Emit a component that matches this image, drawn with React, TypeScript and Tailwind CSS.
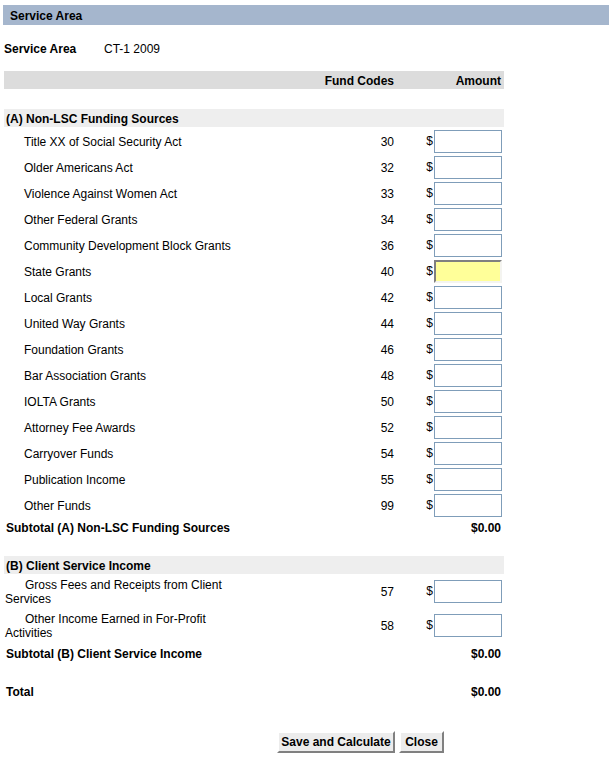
import type { ReactNode } from 'react'

const fundRows: [string, string, boolean?][] = [
  ['Title XX of Social Security Act', '30'],
  ['Older Americans Act', '32'],
  ['Violence Against Women Act', '33'],
  ['Other Federal Grants', '34'],
  ['Community Development Block Grants', '36'],
  ['State Grants', '40', true],
  ['Local Grants', '42'],
  ['United Way Grants', '44'],
  ['Foundation Grants', '46'],
  ['Bar Association Grants', '48'],
  ['IOLTA Grants', '50'],
  ['Attorney Fee Awards', '52'],
  ['Carryover Funds', '54'],
  ['Publication Income', '55'],
  ['Other Funds', '99'],
]

const clientRows: [string, string][] = [
  ['Gross Fees and Receipts from Client Services', '57'],
  ['Other Income Earned in For-Profit Activities', '58'],
]

function AmountInput({ active }: { active?: boolean }) {
  return (
    <div className="flex items-center justify-end pr-[2px]">
      <span className="mr-px">$</span>
      {active ? (
        <input
          className="w-[68px] h-[23px] bg-[#ffff99] border-2 border-t-[#808080] border-l-[#808080] border-b-[#f4f4f0] border-r-[#f4f4f0] outline-none"
          defaultValue=""
        />
      ) : (
        <input
          className="w-[68px] h-[23px] bg-white border border-[#7f9db9] outline-none"
          defaultValue=""
        />
      )}
    </div>
  )
}

function Row({ label, code, active }: { label: string; code: string; active?: boolean }) {
  return (
    <div className="grid grid-cols-[250px_140px_110px] items-center h-[26px]">
      <div className="pl-[20px] pt-px whitespace-nowrap">{label}</div>
      <div className="text-right pt-px">{code}</div>
      <AmountInput active={active} />
    </div>
  )
}

function WrapRow({ label, code }: { label: string; code: string }) {
  return (
    <div className="grid grid-cols-[250px_140px_110px] items-center h-[34px]">
      <div className="indent-[20px] leading-[14px] pr-[12px] pl-px pt-px">{label}</div>
      <div className="text-right pt-px">{code}</div>
      <AmountInput />
    </div>
  )
}

function TotalRow({ children, value }: { children: ReactNode; value: string }) {
  return (
    <div className="flex items-center justify-between h-[18px] font-bold pl-[2px] pr-[3px] pt-[2px]">
      <span>{children}</span>
      <span>{value}</span>
    </div>
  )
}

export default function App() {
  return (
    <div
      className="w-[609px] h-[765px] bg-white text-black text-[12px] pt-[5px]"
      style={{ fontFamily: '"Liberation Sans", Arial, sans-serif' }}
    >
      <div className="ml-[3px] h-[20px] bg-[#a5b6cd] flex items-center pl-[7px] pt-px font-bold">
        Service Area
      </div>

      <div className="pl-[4px] w-[504px]">
        <div className="flex items-center h-[14px] mt-[17px]">
          <span className="w-[100px] font-bold">Service Area</span>
          <span>CT-1 2009</span>
        </div>

        <div className="grid grid-cols-[250px_140px_110px] items-center h-[18px] mt-[15px] pt-px bg-[#dcdcdc] font-bold">
          <div />
          <div className="text-right">Fund Codes</div>
          <div className="text-right pr-[3px]">Amount</div>
        </div>

        <div className="h-[18px] mt-[20px] bg-[#eeeeee] font-bold flex items-center pl-[2px] pt-[2px]">
          (A) Non-LSC Funding Sources
        </div>
        <div className="h-px" />
        {fundRows.map(([label, code, active]) => (
          <Row key={code} label={label} code={code} active={active} />
        ))}
        <TotalRow value="$0.00">Subtotal (A) Non-LSC Funding Sources</TotalRow>

        <div className="h-[18px] mt-[20px] bg-[#eeeeee] font-bold flex items-center pl-[2px] pt-[2px]">
          (B) Client Service Income
        </div>
        {clientRows.map(([label, code]) => (
          <WrapRow key={code} label={label} code={code} />
        ))}
        <div className="mt-[2px]">
          <TotalRow value="$0.00">Subtotal (B) Client Service Income</TotalRow>
        </div>

        <div className="mt-[20px]">
          <TotalRow value="$0.00">Total</TotalRow>
        </div>
      </div>

      <div className="flex gap-[4px] ml-[277px] mt-[31px]">
        <button className="h-[22px] w-[118px] bg-[#ececec] font-bold border-2 border-t-white border-l-white border-b-[#808080] border-r-[#808080]">
          Save and Calculate
        </button>
        <button className="h-[22px] w-[45px] bg-[#ececec] font-bold border-2 border-t-white border-l-white border-b-[#808080] border-r-[#808080]">
          Close
        </button>
      </div>
    </div>
  )
}
